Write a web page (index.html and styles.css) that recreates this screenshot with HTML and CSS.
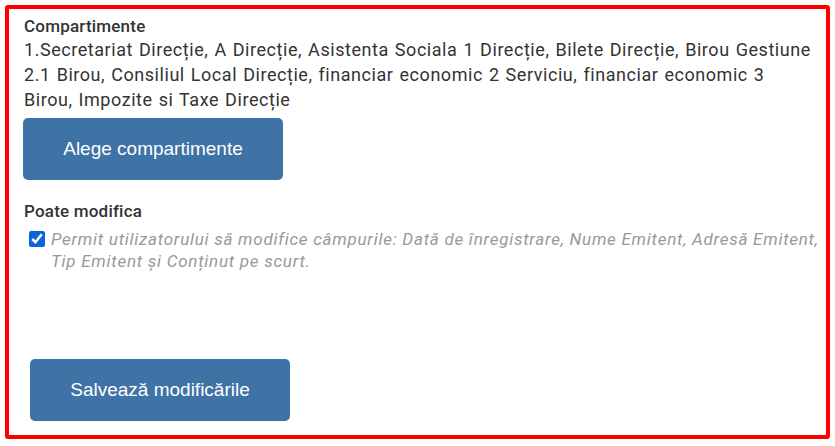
FILE: index.html
```html
<html>
	<head>
		<title>Compartimente</title>
		<link rel="stylesheet" href="styles.css">
	</head>
	<body>
		<div class="panel">
			<div class="field">
				<div class="label">Compartimente</div>
				<div class="list">1.Secretariat Direcție, A Direcție, Asistenta Sociala 1 Direcție, Bilete Direcție, Birou Gestiune 2.1 Birou, Consiliul Local Direcție, financiar economic 2 Serviciu, financiar economic 3 Birou, Impozite si Taxe Direcție</div>
				<button class="btn">Alege compartimente</button>
			</div>
			<div class="field">
				<div class="label">Poate modifica</div>
				<label class="check">
					<input type="checkbox" checked>
					<span>Permit utilizatorului să modifice câmpurile: Dată de înregistrare, Nume Emitent, Adresă Emitent, Tip Emitent și Conținut pe scurt.</span>
				</label>
			</div>
			<div class="actions">
				<button class="btn">Salvează modificările</button>
			</div>
		</div>
	</body>
</html>
```

FILE: styles.css
```css
body {
	margin: 0;
	background-color: #fff;
	font-family: Roboto, "Liberation Sans", sans-serif;
	color: #333;
}
.panel {
	margin: 5px;
	height: 434px;
	box-sizing: border-box;
	border: 4px solid #f00;
	border-radius: 3px;
	padding: 7px 8px 0 15px;
	display: flex;
	flex-direction: column;
}
.label {
	font-size: 17px;
	font-weight: 500;
	line-height: 21px;
	letter-spacing: 0.2px;
	color: #333;
}
.list {
	font-size: 18px;
	line-height: 25px;
	letter-spacing: 0.55px;
	word-spacing: 1px;
	color: #333;
}
.btn {
	width: 260px;
	height: 62px;
	border: none;
	border-radius: 5px;
	background-color: #3f72a5;
	color: #fff;
	font-family: "Liberation Sans", Arial, sans-serif;
	font-size: 19px;
	cursor: pointer;
}
.field .btn {
	margin: 6px 0 0 -1px;
}
.field + .field {
	margin-top: 21px;
}
.check {
	display: flex;
	align-items: flex-start;
	margin: 6px -6px 0 0;
	font-style: italic;
	font-size: 17px;
	line-height: 22px;
	letter-spacing: 0.74px;
	color: #999;
}
.check input {
	width: 16px;
	height: 16px;
	margin: 3px 6px 0 5px;
	flex: none;
	accent-color: #0b65d8;
}
.actions {
	margin-top: auto;
	padding: 0 0 14px 6px;
}
```
